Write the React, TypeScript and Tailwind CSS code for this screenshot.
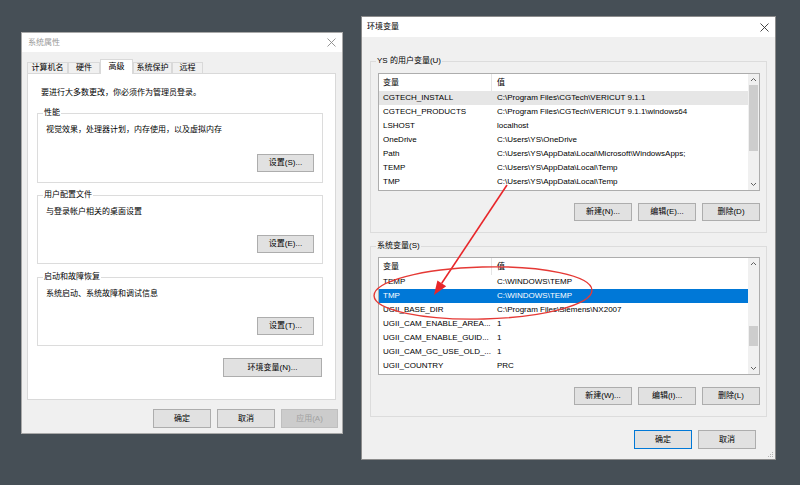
import React from 'react';

const FONT = "font-['Liberation_Sans','Noto_Sans_CJK_SC',sans-serif]";

function CloseX({ color }: { color: string }) {
  return (
    <svg width="9" height="9" viewBox="0 0 9 9">
      <path d="M0.5 0.5 L8.5 8.5 M8.5 0.5 L0.5 8.5" stroke={color} strokeWidth="0.9" fill="none" />
    </svg>
  );
}

const buttonStyles = {
  normal: 'border-[#adadad] bg-[#e1e1e1] text-black',
  focused: 'border-[#0078d7] bg-[#e1e1e1] text-black',
  disabled: 'border-[#bfbfbf] bg-[#cccccc] text-[#a0a0a0]',
};

function Button({
  children,
  className = '',
  variant = 'normal',
}: {
  children: React.ReactNode;
  className?: string;
  variant?: keyof typeof buttonStyles;
}) {
  return (
    <div
      className={`flex shrink-0 items-center justify-center border text-[8px] leading-none ${buttonStyles[variant]} ${className}`}
    >
      {children}
    </div>
  );
}

function Group({
  label,
  labelBg,
  className = '',
  children,
}: {
  label: string;
  labelBg: string;
  className?: string;
  children: React.ReactNode;
}) {
  return (
    <div className={`relative shrink-0 border border-[#dcdcdc] ${className}`}>
      <span className={`absolute left-[5px] top-[-6px] px-[1px] text-[8px] leading-[10px] ${labelBg}`}>{label}</span>
      {children}
    </div>
  );
}

function Chevron({ up }: { up?: boolean }) {
  return (
    <svg width="7" height="5" viewBox="0 0 7 5">
      <path d={up ? 'M1 4 L3.5 1.5 L6 4' : 'M1 1 L3.5 3.5 L6 1'} stroke="#606060" strokeWidth="1" fill="none" />
    </svg>
  );
}

type Row = { name: string; value: string; sel?: 'gray' | 'blue' };

function VarList({ rows, thumbTop, thumbH }: { rows: Row[]; thumbTop: string; thumbH: string }) {
  return (
    <div className="flex h-[118px] w-[382px] shrink-0 border border-[#adadad] bg-white">
      <div className="flex min-w-0 flex-1 flex-col text-[8px] text-black">
        <div className="flex h-[17px] shrink-0 items-center leading-none">
          <div className="flex h-full w-[113px] items-center border-r border-[#e5e5e5] pl-[4px]">变量</div>
          <div className="pl-[5px]">值</div>
        </div>
        {rows.map((r) => (
          <div
            key={r.name}
            className={`flex h-[14px] shrink-0 items-center whitespace-nowrap leading-none ${
              r.sel === 'blue' ? 'bg-[#0078d7] text-white' : r.sel === 'gray' ? 'bg-[#e6e6e6]' : ''
            }`}
          >
            <div className="w-[113px] overflow-hidden pl-[4px]">{r.name}</div>
            <div className="pl-[5px]">{r.value}</div>
          </div>
        ))}
      </div>
      <div className="flex w-[11px] shrink-0 flex-col items-center bg-[#f0f0f0]">
        <div className="flex h-[11px] w-full items-center justify-center">
          <Chevron up />
        </div>
        <div className={`w-full ${thumbTop}`} />
        <div className={`w-[9px] bg-[#cdcdcd] ${thumbH}`} />
        <div className="flex-1" />
        <div className="flex h-[11px] w-full items-center justify-center">
          <Chevron />
        </div>
      </div>
    </div>
  );
}

const tabs = [
  { label: '计算机名', cls: 'w-[41px]' },
  { label: '硬件', cls: 'w-[32px]' },
  { label: '高级', cls: 'w-[33px]', active: true },
  { label: '系统保护', cls: 'w-[39px]' },
  { label: '远程', cls: 'w-[31px]' },
];

const userRows: Row[] = [
  { name: 'CGTECH_INSTALL', value: 'C:\\Program Files\\CGTech\\VERICUT 9.1.1', sel: 'gray' },
  { name: 'CGTECH_PRODUCTS', value: 'C:\\Program Files\\CGTech\\VERICUT 9.1.1\\windows64' },
  { name: 'LSHOST', value: 'localhost' },
  { name: 'OneDrive', value: 'C:\\Users\\YS\\OneDrive' },
  { name: 'Path', value: 'C:\\Users\\YS\\AppData\\Local\\Microsoft\\WindowsApps;' },
  { name: 'TEMP', value: 'C:\\Users\\YS\\AppData\\Local\\Temp' },
  { name: 'TMP', value: 'C:\\Users\\YS\\AppData\\Local\\Temp' },
];

const sysRows: Row[] = [
  { name: 'TEMP', value: 'C:\\WINDOWS\\TEMP' },
  { name: 'TMP', value: 'C:\\WINDOWS\\TEMP', sel: 'blue' },
  { name: 'UGII_BASE_DIR', value: 'C:\\Program Files\\Siemens\\NX2007' },
  { name: 'UGII_CAM_ENABLE_AREA...', value: '1' },
  { name: 'UGII_CAM_ENABLE_GUID...', value: '1' },
  { name: 'UGII_CAM_GC_USE_OLD_...', value: '1' },
  { name: 'UGII_COUNTRY', value: 'PRC' },
];

function SystemProperties() {
  const groups = [
    { label: '性能', desc: '视觉效果，处理器计划，内存使用，以及虚拟内存', btn: '设置(S)...', cls: 'mt-[15px] h-[70px]' },
    { label: '用户配置文件', desc: '与登录帐户相关的桌面设置', btn: '设置(E)...', cls: 'mt-[12px] h-[69px]' },
    { label: '启动和故障恢复', desc: '系统启动、系统故障和调试信息', btn: '设置(T)...', cls: 'mt-[13px] h-[69px]' },
  ];
  return (
    <div className="absolute left-[21px] top-[32px] flex h-[402px] w-[322px] flex-col border border-[#a9a9a9] bg-[#f0f0f0] text-[8px] text-black">
      <div className="flex h-[19px] shrink-0 items-center justify-between bg-white pl-[6px] pr-[6px] text-[#999999]">
        <span className="leading-none">系统属性</span>
        <CloseX color="#8a8a8a" />
      </div>
      <div className="relative z-10 ml-[5px] mt-[7px] flex h-[14px] shrink-0 items-end">
        {tabs.map((t) =>
          t.active ? (
            <div
              key={t.label}
              className={`mb-[-1px] flex h-[15px] items-center justify-center border border-b-0 border-[#d9d9d9] bg-white leading-none ${t.cls}`}
            >
              {t.label}
            </div>
          ) : (
            <div
              key={t.label}
              className={`flex h-[11px] items-center justify-center border border-b-0 border-[#d9d9d9] bg-[#f0f0f0] leading-none ${t.cls}`}
            >
              {t.label}
            </div>
          ),
        )}
      </div>
      <div className="ml-[5px] flex h-[327px] w-[309px] shrink-0 flex-col border border-[#d9d9d9] bg-white px-[9px] pt-[14px]">
        <div className="ml-[4px] leading-[10px]">要进行大多数更改，你必须作为管理员登录。</div>
        {groups.map((g) => (
          <Group key={g.label} label={g.label} labelBg="bg-white" className={`flex w-[286px] flex-col justify-between px-[8px] pb-[10px] pt-[11px] ${g.cls}`}>
            <div className="leading-[10px]">{g.desc}</div>
            <Button className="h-[18px] w-[57px] self-end">{g.btn}</Button>
          </Group>
        ))}
        <Button className="mr-[4px] mt-[12px] h-[19px] w-[99px] self-end">环境变量(N)...</Button>
      </div>
      <div className="mt-[9px] flex shrink-0 justify-end gap-[6px] pr-[4px]">
        <Button className="h-[19px] w-[58px]">确定</Button>
        <Button className="h-[19px] w-[58px]">取消</Button>
        <Button variant="disabled" className="h-[19px] w-[57px]">应用(A)</Button>
      </div>
    </div>
  );
}

function EnvironmentVariables() {
  return (
    <div className="absolute left-[361px] top-[16px] flex h-[444px] w-[415px] flex-col border border-[#8c8c8c] bg-[#f0f0f0] text-[8px] text-black">
      <div className="flex h-[20px] shrink-0 items-center justify-between bg-white pl-[5px] pr-[6px]">
        <span className="leading-none">环境变量</span>
        <CloseX color="#333333" />
      </div>
      <Group
        label="YS 的用户变量(U)"
        labelBg="bg-[#f0f0f0]"
        className="ml-[8px] mt-[24px] flex h-[172px] w-[397px] flex-col pl-[7px] pt-[11px]"
      >
        <VarList rows={userRows} thumbTop="h-0" thumbH="h-[66px]" />
        <div className="mt-[12px] flex w-[382px] justify-end gap-[6px]">
          <Button className="h-[18px] w-[58px]">新建(N)...</Button>
          <Button className="h-[18px] w-[58px]">编辑(E)...</Button>
          <Button className="h-[18px] w-[58px]">删除(D)</Button>
        </div>
      </Group>
      <Group
        label="系统变量(S)"
        labelBg="bg-[#f0f0f0]"
        className="ml-[8px] mt-[13px] flex h-[171px] w-[397px] flex-col pl-[7px] pt-[10px]"
      >
        <VarList rows={sysRows} thumbTop="h-[57px]" thumbH="h-[20px]" />
        <div className="mt-[12px] flex w-[382px] justify-end gap-[6px]">
          <Button className="h-[18px] w-[58px]">新建(W)...</Button>
          <Button className="h-[18px] w-[58px]">编辑(I)...</Button>
          <Button className="h-[18px] w-[58px]">删除(L)</Button>
        </div>
      </Group>
      <div className="mt-[13px] flex shrink-0 justify-end gap-[6px] pr-[19px]">
        <Button variant="focused" className="h-[19px] w-[58px]">确定</Button>
        <Button className="h-[19px] w-[58px]">取消</Button>
      </div>
      <svg className="absolute bottom-[1px] right-[1px]" width="8" height="8" viewBox="0 0 8 8">
        <rect x="6" y="2" width="1" height="1" fill="#b5b5b5" />
        <rect x="4" y="4" width="1" height="1" fill="#b5b5b5" />
        <rect x="6" y="4" width="1" height="1" fill="#b5b5b5" />
        <rect x="2" y="6" width="1" height="1" fill="#b5b5b5" />
        <rect x="4" y="6" width="1" height="1" fill="#b5b5b5" />
        <rect x="6" y="6" width="1" height="1" fill="#b5b5b5" />
      </svg>
    </div>
  );
}

export default function App() {
  return (
    <div className={`relative h-[485px] w-[800px] overflow-hidden bg-[#464f56] ${FONT}`}>
      <SystemProperties />
      <EnvironmentVariables />
      {/* red annotation drawn over the screenshot */}
      <svg className="pointer-events-none absolute inset-0" width="800" height="485" viewBox="0 0 800 485">
        <line x1="507" y1="185" x2="441.7" y2="283.3" stroke="#e8262a" strokeWidth="1.6" />
        <polygon points="434,295 446.2,286.3 437.4,280.4" fill="#e8262a" />
        <ellipse cx="483" cy="293" rx="109" ry="26" fill="none" stroke="#e53935" strokeWidth="1.4" transform="rotate(-1.5 483 293)" />
      </svg>
    </div>
  );
}
